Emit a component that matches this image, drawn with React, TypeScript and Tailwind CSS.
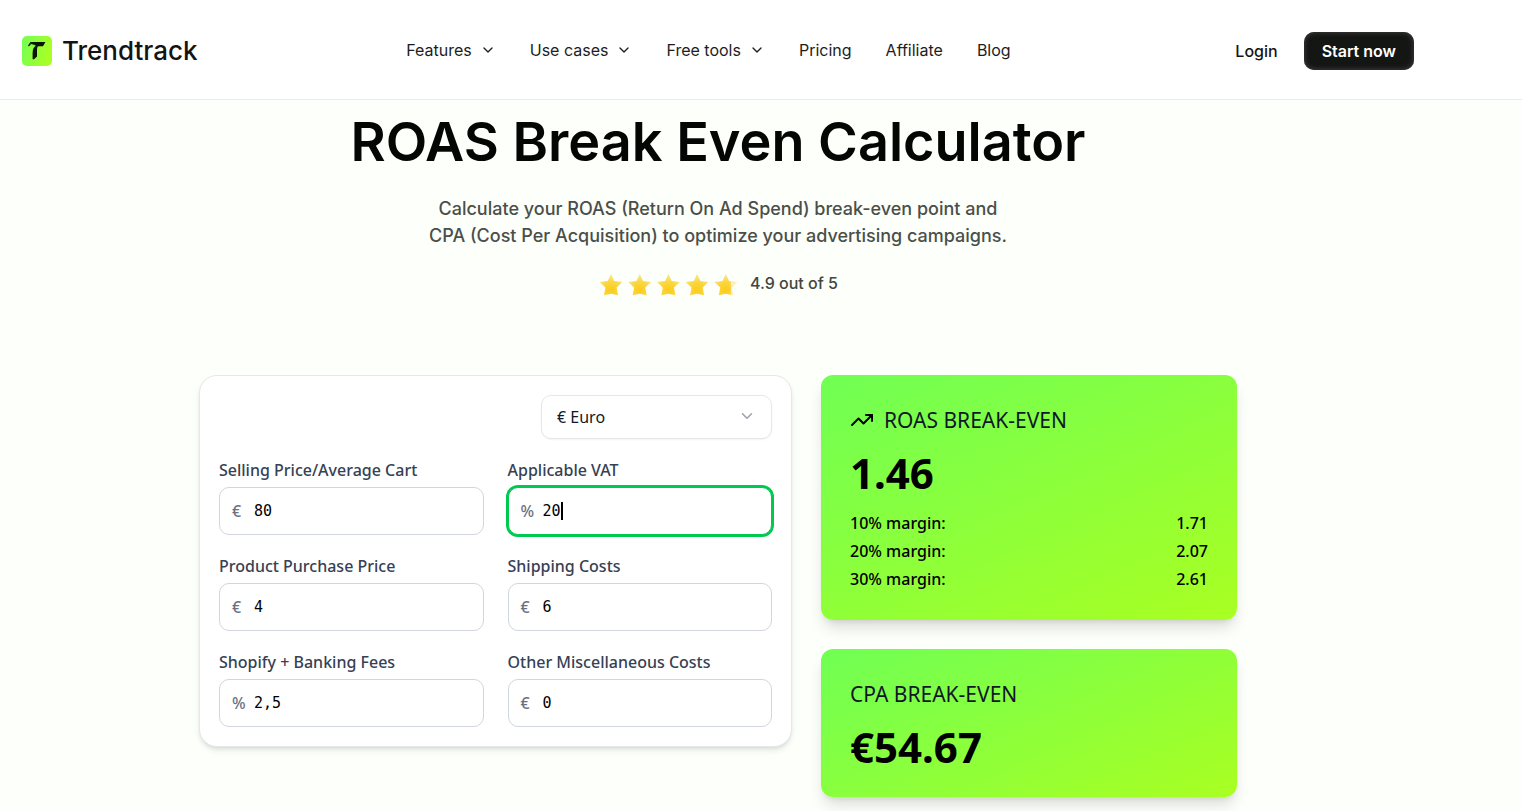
import React, { useState } from 'react';
import { ChevronDown, TrendingUp } from 'lucide-react';

type FieldKey = 'price' | 'vat' | 'purchase' | 'shipping' | 'fees' | 'other';

interface CostFieldProps {
  id: string;
  label: string;
  value: string;
  symbol: string;
  autoFocus?: boolean;
  onChange: (value: string) => void;
}

interface NavItem {
  label: string;
  hasMenu?: boolean;
}

const NAV_ITEMS: NavItem[] = [
  { label: 'Features', hasMenu: true },
  { label: 'Use cases', hasMenu: true },
  { label: 'Free tools', hasMenu: true },
  { label: 'Pricing' },
  { label: 'Affiliate' },
  { label: 'Blog' },
];

const CURRENCIES = [
  { symbol: '€', name: 'Euro' },
  { symbol: '$', name: 'Dollar' },
  { symbol: '£', name: 'Pound' },
];

const FIELDS: { key: FieldKey; label: string; percent?: boolean }[] = [
  { key: 'price', label: 'Selling Price/Average Cart' },
  { key: 'vat', label: 'Applicable VAT', percent: true },
  { key: 'purchase', label: 'Product Purchase Price' },
  { key: 'shipping', label: 'Shipping Costs' },
  { key: 'fees', label: 'Shopify + Banking Fees', percent: true },
  { key: 'other', label: 'Other Miscellaneous Costs' },
];

// Accept both decimal separators
const toNumber = (value: string) => parseFloat(value.replace(',', '.')) || 0;

const formatRatio = (price: number, spend: number) =>
  spend > 0 ? (price / spend).toFixed(2) : '-';

const Logo: React.FC = () => (
  <a href="#" className="flex items-center gap-2.5 text-[#141414]">
    <svg className="size-[30px]" viewBox="0 0 30 30" aria-hidden="true">
      <defs>
        <linearGradient id="logo-bg" x1="0" y1="0" x2="1" y2="0.3">
          <stop offset="0" stopColor="#73ff55" />
          <stop offset="1" stopColor="#a8ff26" />
        </linearGradient>
      </defs>
      <rect width="30" height="30" rx="5" fill="url(#logo-bg)" />
      <path d="M8.5 6H23.4L21 10.2H16.7C15 10.3 15.2 12 15 14V20.5L11.7 23.5L10.6 23V17C10.6 13 12 11 14 9.8L9.3 8.6L6.3 10.4L6.2 9.2Z" fill="#0b1405" />
      <path d="M8.4 8.2L13.2 9.5" stroke="#80ff48" strokeWidth="0.8" />
    </svg>
    <span className="text-[26px] leading-8 font-medium">Trendtrack</span>
  </a>
);

const Header: React.FC = () => (
  <header className="border-b border-[#ebebeb] bg-white pr-[86px]">
    <div className="flex h-[99px] items-center justify-between px-[22px]">
      <div className="pt-0.5">
        <Logo />
      </div>
      <nav className="mr-4 flex items-center gap-[34px] text-base text-[#1d1d1d]">
        {NAV_ITEMS.map((item) =>
          item.hasMenu ? (
            <button key={item.label} type="button" className="flex items-center gap-2">
              {item.label}
              <ChevronDown className="size-4" strokeWidth={2} />
            </button>
          ) : (
            <a key={item.label} href="#">
              {item.label}
            </a>
          )
        )}
      </nav>
      <div className="flex items-center gap-[26px] pt-0.5">
        <a href="#" className="text-base font-medium text-[#141414]">
          Login
        </a>
        <button
          type="button"
          className="h-[38px] rounded-[10px] bg-[#141614] px-[18px] text-base font-semibold text-white shadow-[inset_0_0_5px_1px_#3a3a3a]"
        >
          Start now
        </button>
      </div>
    </div>
  </header>
);

const Stars: React.FC = () => (
  <svg className="h-7 w-[140px]" viewBox="0 0 140 28" aria-hidden="true">
    <defs>
      <radialGradient id="star-fill" cx="0.5" cy="0.75" r="0.7">
        <stop offset="0" stopColor="#fccb1c" />
        <stop offset="0.5" stopColor="#fad63d" />
        <stop offset="1" stopColor="#fbe58c" />
      </radialGradient>
      <linearGradient id="star-last" x1="0" x2="1" y1="0" y2="0">
        <stop offset="0.7" stopColor="#fff" stopOpacity="0" />
        <stop offset="0.75" stopColor="#fff" stopOpacity="0.6" />
      </linearGradient>
    </defs>
    {[0, 1, 2, 3, 4].map((i) => (
      <g key={i} transform={`translate(${2 + i * 28.7} 5)`}>
        <path
          d="M11 0L14.3 7L22.4 8L16.6 13.5L18 21.3L11 19.8L4 21.3L5.4 13.5L-0.4 8L7.7 7Z"
          fill="url(#star-fill)"
        />
        {i === 4 && (
          <path
            d="M11 0L14.3 7L22.4 8L16.6 13.5L18 21.3L11 19.8L4 21.3L5.4 13.5L-0.4 8L7.7 7Z"
            fill="url(#star-last)"
          />
        )}
      </g>
    ))}
  </svg>
);

const CostField: React.FC<CostFieldProps> = ({ id, label, value, symbol, autoFocus, onChange }) => (
  <div>
    <label htmlFor={id} className="mb-[5px] block text-base leading-6 font-medium text-[#364153]">
      {label}
    </label>
    <div className="group flex h-12 items-center rounded-[10px] border border-gray-300 bg-white pl-3 focus-within:border-[#00c950] focus-within:ring-2 focus-within:ring-[#00c950]">
      <span className="w-[22px] shrink-0 text-base font-medium text-gray-500">{symbol}</span>
      <div className="relative h-full flex-1 font-['DejaVu_Sans_Mono',monospace] text-[15px]">
        <input
          id={id}
          type="text"
          inputMode="decimal"
          value={value}
          autoFocus={autoFocus}
          onChange={(e) => onChange(e.target.value)}
          className="h-full w-full min-w-0 bg-transparent text-black caret-transparent outline-none"
        />
        {/* Thick caret after the last digit */}
        <span
          className="pointer-events-none absolute inset-y-3.5 hidden w-0.5 bg-black group-focus-within:block"
          style={{ left: `${value.length}ch` }}
        />
      </div>
    </div>
  </div>
);

const ResultCard: React.FC<{
  title: string;
  value: string;
  icon?: React.ReactNode;
  children?: React.ReactNode;
}> = ({ title, value, icon, children }) => (
  <section className="rounded-xl bg-linear-[155deg,#70ff54,#a9ff22] p-[29px] shadow-[0_10px_15px_-3px_rgba(0,0,0,0.14),0_4px_6px_-4px_rgba(0,0,0,0.12)]">
    <h2 className="mb-[17px] flex items-center gap-2.5 text-[21px] leading-8 text-[#101828]">
      {icon}
      {title}
    </h2>
    <p className="pb-px text-[42px] leading-10 font-bold text-black">{value}</p>
    {children}
  </section>
);

const App: React.FC = () => {
  const [currency, setCurrency] = useState('€');
  const [values, setValues] = useState<Record<FieldKey, string>>({
    price: '80',
    vat: '20',
    purchase: '4',
    shipping: '6',
    fees: '2,5',
    other: '0',
  });

  const price = toNumber(values.price);
  const net = price / (1 + toNumber(values.vat) / 100);
  const costs =
    toNumber(values.purchase) +
    toNumber(values.shipping) +
    toNumber(values.other) +
    (price * toNumber(values.fees)) / 100;
  const cpa = net - costs;

  return (
    <div className="min-h-screen bg-[#fdfffa] font-['Inter',sans-serif]">
      <Header />

      <main className="pr-[86px] pb-3">
        <div className="flex flex-col items-center px-5 pt-2 text-center">
          <h1 className="text-[54px] leading-[68px] font-semibold text-[#030603]">
            ROAS Break Even Calculator
          </h1>
          <p className="mt-[19px] max-w-[620px] text-lg leading-[27px] font-medium text-[#4a4f4a]">
            Calculate your ROAS (Return On Ad Spend) break-even point and
            <br />
            CPA (Cost Per Acquisition) to optimize your advertising campaigns.
          </p>
          <div className="mt-5 flex items-center gap-3">
            <Stars />
            <span className="text-base font-medium text-[#414641]">4.9 out of 5</span>
          </div>
        </div>

        <div className="mx-auto mt-[78px] grid max-w-[1038px] grid-cols-[593fr_416fr] items-start gap-[29px] font-['Noto_Sans',sans-serif]">
          <form className="rounded-[18px] border border-gray-200 bg-white p-[19px] shadow-md">
            <div className="relative mb-[19px] ml-auto h-11 w-[231px]">
              <select
                aria-label="Currency"
                value={currency}
                onChange={(e) => setCurrency(e.target.value)}
                className="h-full w-full appearance-none rounded-[10px] border border-gray-200 bg-white pl-[15px] text-base text-[#101828] shadow-xs"
              >
                {CURRENCIES.map((c) => (
                  <option key={c.symbol} value={c.symbol}>
                    {c.symbol} {c.name}
                  </option>
                ))}
              </select>
              <ChevronDown className="pointer-events-none absolute top-3 right-4 size-[18px] text-gray-400" strokeWidth={2} />
            </div>

            <div className="grid grid-cols-2 gap-x-6 gap-y-[19px]">
              {FIELDS.map((field) => (
                <CostField
                  key={field.key}
                  id={`field-${field.key}`}
                  label={field.label}
                  symbol={field.percent ? '%' : currency}
                  value={values[field.key]}
                  autoFocus={field.key === 'vat'}
                  onChange={(value) => setValues({ ...values, [field.key]: value })}
                />
              ))}
            </div>
          </form>

          <div className="flex flex-col gap-[29px]">
            <ResultCard
              title="ROAS BREAK-EVEN"
              value={formatRatio(price, cpa)}
              icon={<TrendingUp className="size-6 text-black" strokeWidth={2} />}
            >
              <dl className="mt-[17px] flex flex-col gap-1 text-base leading-6 font-medium text-black">
                {[10, 20, 30].map((margin) => (
                  <div key={margin} className="flex justify-between">
                    <dt>{margin}% margin:</dt>
                    <dd>{formatRatio(price, cpa - (price * margin) / 100)}</dd>
                  </div>
                ))}
              </dl>
            </ResultCard>
            <ResultCard title="CPA BREAK-EVEN" value={`${currency}${cpa.toFixed(2)}`} />
          </div>
        </div>
      </main>
    </div>
  );
};

export default App;
